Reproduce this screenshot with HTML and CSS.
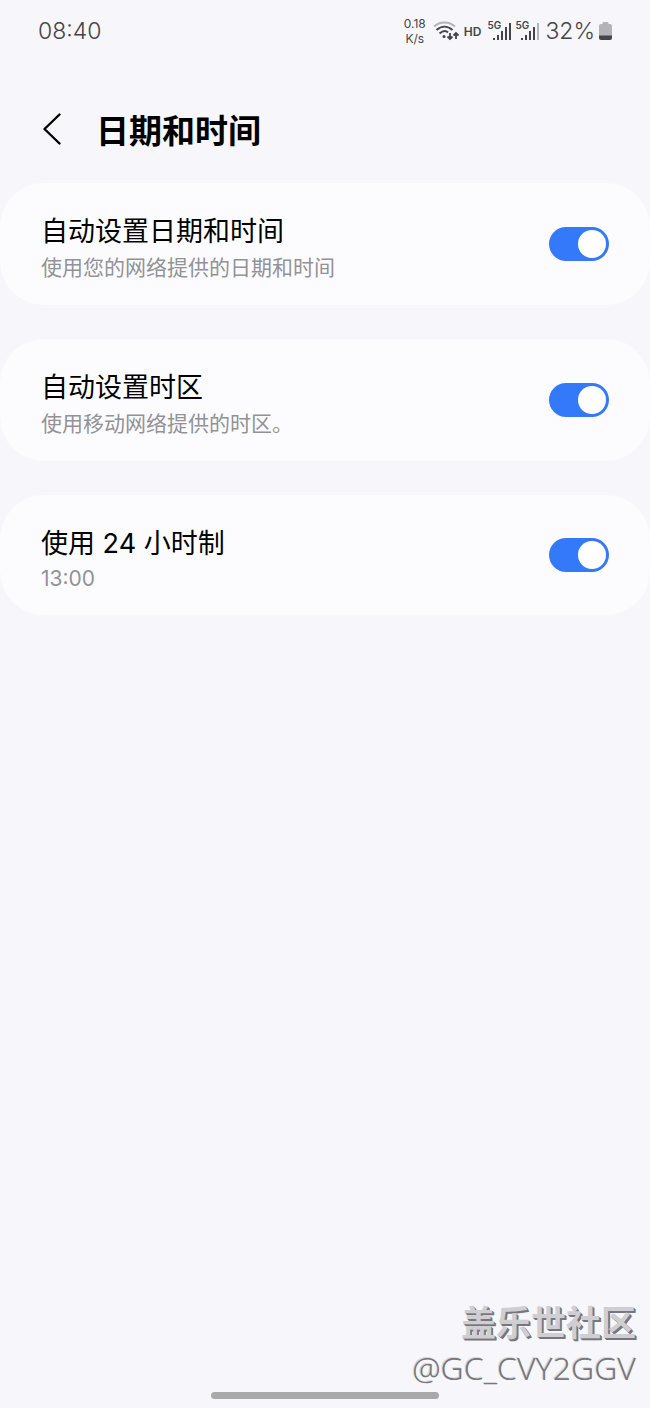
FILE: index.html
```html
<!DOCTYPE html>
<html lang="zh-CN">
<head>
    <meta charset="UTF-8">
    <meta name="viewport" content="width=device-width, initial-scale=1.0">
    <title>日期和时间</title>
    <link rel="stylesheet" href="styles.css">
</head>
<body>
    <div class="status-bar">
        <span class="clock">08:40</span>
        <div class="status-icons">
            <div class="net-speed"><span>0.18</span><span>K/s</span></div>
            <svg class="wifi" width="26" height="20" viewBox="0 0 26 20" fill="none" stroke-width="2">
                <path d="M1 5.5C7 0 16 0 22 5.5" stroke="#b4b4b8"/>
                <path d="M3.500 9C8.500 4.500 14.500 4.500 19.500 9M6.500 12.500C10 9.500 13 9.500 15 11.500" stroke="#454548"/>
                <circle cx="11" cy="15.500" r="1.500" fill="#454548"/>
                <path d="M17 12v6M14.500 15.500L17 18l2.500-2.500M23 18v-6M20.500 14.500L23 12l2.500 2.500" stroke="#454548" stroke-width="1.800"/>
            </svg>
            <span class="hd">HD</span>
            <div class="signal">
                <span class="signal-label">5G</span>
                <svg width="18" height="18" viewBox="0 0 18 18" fill="#454548">
                    <rect x="0" y="16" width="2" height="2"/>
                    <rect x="4" y="13" width="2" height="5"/>
                    <rect x="8" y="9" width="2" height="9"/>
                    <rect x="12" y="5" width="2" height="13"/>
                    <rect x="16" y="1" width="2" height="17"/>
                </svg>
            </div>
            <div class="signal">
                <span class="signal-label">5G</span>
                <svg width="18" height="18" viewBox="0 0 18 18" fill="#454548">
                    <rect x="0" y="16" width="2" height="2"/>
                    <rect x="4" y="13" width="2" height="5"/>
                    <rect x="8" y="9" width="2" height="9"/>
                    <rect x="12" y="5" width="2" height="13"/>
                    <rect x="16" y="1" width="2" height="17" fill="#b4b4b8"/>
                </svg>
            </div>
            <span class="battery-text">32%</span>
            <svg class="battery" width="13" height="18" viewBox="0 0 13 18">
                <path d="M3.500 2V1Q3.500 0 4.500 0h4q1 0 1 1v1H11q2 0 2 2v10H0V4q0-2 2-2z" fill="#b4b4b8"/>
                <path d="M0 13.500h13V16q0 2-2 2H2q-2 0-2-2z" fill="#454548"/>
            </svg>
        </div>
    </div>

    <header class="header">
        <button type="button" class="back-btn" aria-label="返回">
            <svg width="18" height="32" viewBox="0 0 18 32" fill="none" stroke="#000" stroke-width="2.400" stroke-linecap="round" stroke-linejoin="round">
                <path d="M16.500 1.500L1.500 16l15 14.500"/>
            </svg>
        </button>
        <h1>日期和时间</h1>
    </header>

    <main class="settings">
        <label class="card" for="autoDate">
            <span class="card-text">
                <span class="card-title">自动设置日期和时间</span>
                <span class="card-desc">使用您的网络提供的日期和时间</span>
            </span>
            <input type="checkbox" class="switch" id="autoDate" checked>
        </label>
        <label class="card" for="autoZone">
            <span class="card-text">
                <span class="card-title">自动设置时区</span>
                <span class="card-desc">使用移动网络提供的时区。</span>
            </span>
            <input type="checkbox" class="switch" id="autoZone" checked>
        </label>
        <label class="card" for="use24h">
            <span class="card-text">
                <span class="card-title">使用 24 小时制</span>
                <span class="card-desc card-time">13:00</span>
            </span>
            <input type="checkbox" class="switch" id="use24h" checked>
        </label>
    </main>

    <div class="watermark">
        <span class="watermark-name">盖乐世社区</span>
        <span class="watermark-user">@GC_CVY2GGV</span>
    </div>
    <div class="gesture-bar"></div>
</body>
</html>
```
FILE: styles.css
```css
* {
    box-sizing: border-box;
}
body {
    position: relative;
    display: flex;
    flex-direction: column;
    min-height: 100vh;
    margin: 0;
    background-color: #f6f6fb;
    color: #000;
    font-family: Inter, "Noto Sans CJK SC", sans-serif;
}

/* Barra de estado */
.status-bar {
    display: flex;
    justify-content: space-between;
    align-items: center;
    height: 62px;
    padding: 0 38px;
    color: #454548;
}
.clock {
    font-size: 23px;
    font-weight: 300;
}
.status-icons {
    display: flex;
    align-items: center;
}
.net-speed {
    display: flex;
    flex-direction: column;
    align-items: center;
    margin-right: 7px;
    font-size: 12px;
    line-height: 15px;
}
.wifi {
    margin-right: 5px;
}
.hd {
    margin-right: 6px;
    font-size: 12px;
    font-weight: 600;
}
.signal {
    position: relative;
    padding-left: 6px;
    margin-right: 4px;
    line-height: 0;
}
.signal-label {
    position: absolute;
    top: -2px;
    left: 0;
    font-size: 10px;
    font-weight: 600;
    line-height: 10px;
}
.battery-text {
    margin: 0 4px 0 2px;
    font-size: 23px;
    font-weight: 300;
}

/* Cabecera */
.header {
    display: flex;
    align-items: center;
    gap: 35px;
    padding: 42px 43px 29px;
}
.back-btn {
    display: flex;
    padding: 0;
    border: none;
    background: none;
    cursor: pointer;
}
h1 {
    margin: 0;
    padding-top: 4px;
    font-size: 33px;
    font-weight: 600;
    line-height: 46px;
}

/* Tarjetas */
.settings {
    display: flex;
    flex: 1;
    flex-direction: column;
    gap: 34px;
}
.card {
    display: flex;
    justify-content: space-between;
    align-items: center;
    padding: 21px 41px;
    border-radius: 44px;
    background-color: #fcfcff;
    cursor: pointer;
}
.card-text {
    display: flex;
    flex-direction: column;
    padding-top: 8px;
}
.card-title {
    font-size: 27px;
    line-height: 40px;
}
.card-desc {
    color: #929297;
    font-size: 21px;
    line-height: 32px;
}
.card-time {
    line-height: 30px;
}
.switch {
    display: flex;
    align-items: center;
    justify-content: flex-end;
    width: 60px;
    height: 34px;
    margin: 0;
    padding: 3px;
    border-radius: 17px;
    background-color: #b4b4b8;
    appearance: none;
    cursor: pointer;
}
.switch::before {
    content: "";
    width: 28px;
    height: 28px;
    margin-right: auto;
    border-radius: 50%;
    background-color: #fff;
}
.switch:checked {
    background-color: #3579fb;
}
.switch:checked::before {
    margin-right: 0;
}

/* Marca de agua */
.watermark {
    position: absolute;
    right: 14px;
    bottom: 18px;
    display: flex;
    flex-direction: column;
    align-items: flex-end;
}
.watermark-name {
    color: #cfcfd3;
    font-size: 35px;
    font-weight: 700;
    line-height: 46px;
    text-shadow: 1px 1px #77777b, 2px 2px #77777b;
}
.watermark-user {
    color: #77777b;
    font-family: "Noto Sans", sans-serif;
    font-size: 32px;
    font-weight: 300;
    line-height: 44px;
    text-shadow: -1px -1px #d8d8dc;
}
.gesture-bar {
    align-self: center;
    width: 35%;
    height: 7px;
    margin-bottom: 9px;
    border-radius: 4px;
    background-color: #a9a9ab;
}
```
